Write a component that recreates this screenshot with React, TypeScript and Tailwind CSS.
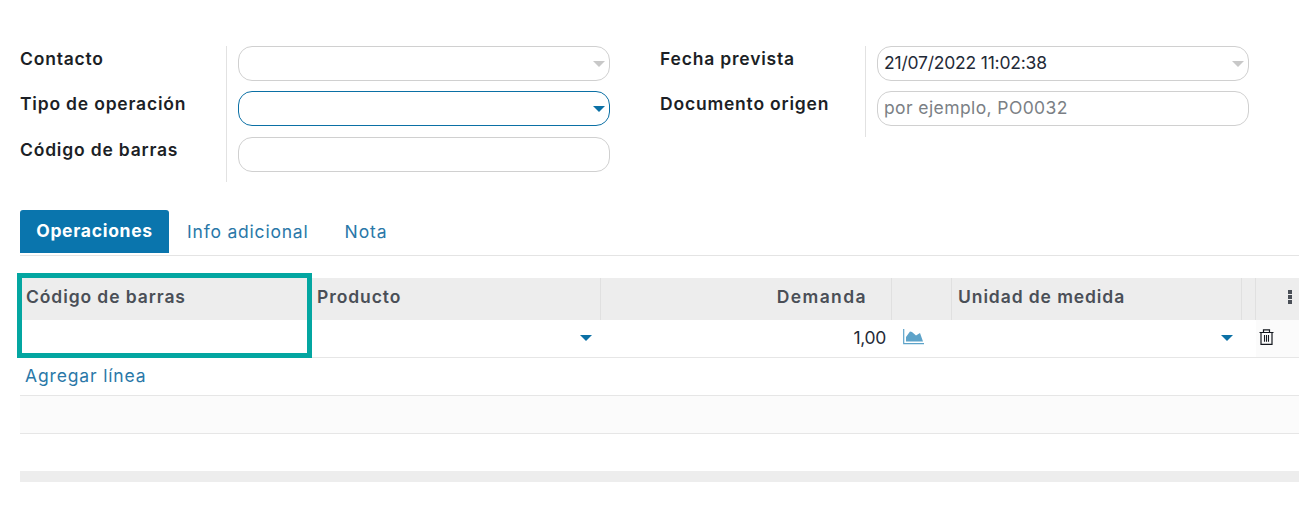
const font = "font-['Inter','Open_Sans',sans-serif]";

function Caret({ color }: { color: string }) {
  return (
    <svg width="12" height="6" viewBox="0 0 12 6" className="shrink-0">
      <path d="M0 0H12L6 6Z" fill={color} />
    </svg>
  );
}

function Field({ children, caret, focus, className = "" }: { children?: React.ReactNode; caret?: string; focus?: boolean; className?: string }) {
  return (
    <div className={`flex h-[35px] w-[372px] items-center justify-between rounded-[14px] border bg-white pl-[6px] pr-[4px] text-[17.5px] tracking-[-0.2px] text-[#1f2a37] ${focus ? "border-[#0b70a5]" : "border-[#d0d0d0]"} ${className}`}>
      <span>{children}</span>
      {caret && <Caret color={caret} />}
    </div>
  );
}

function Label({ children, className = "" }: { children: React.ReactNode; className?: string }) {
  return <div className={`flex h-[35px] items-start text-[17.5px] font-semibold leading-[26px] tracking-[0.8px] text-[#1c1f26] ${className}`}>{children}</div>;
}

function Head({ children, right, line = true }: { children?: React.ReactNode; right?: boolean; line?: boolean }) {
  return (
    <div className={`flex h-full items-center px-[6px] pb-[4px] text-[17.5px] font-semibold tracking-[0.9px] text-[#4a4f57] ${right ? "justify-end pr-[24px] tracking-[1.4px]" : ""} ${line ? "border-r border-[#e0e0e0]" : ""}`}>
      {children}
    </div>
  );
}

const cols = "grid-cols-[291px_290px_291px_60px_290px_14px_43px]";

export default function App() {
  return (
    <div className={`${font} h-[510px] w-[1313px] overflow-hidden bg-white pl-[20px] pr-[14px] pt-[46px]`}>
      <div className="flex">
        <div className="grid w-[590px] grid-cols-[207px_1fr]">
          <div className="flex flex-col gap-[10px] border-r border-[#e2e2e2] pb-[10px]">
            <Label>Contacto</Label>
            <Label>Tipo de operación</Label>
            <Label className="mt-[1px]">Código de barras</Label>
          </div>
          <div className="flex flex-col gap-[10px] pl-[11px]">
            <Field caret="#c8c8c8" />
            <Field caret="#0b70a5" focus />
            <Field className="mt-[1px]" />
          </div>
        </div>
        <div className="ml-[50px] grid h-[91px] grid-cols-[206px_1fr]">
          <div className="flex flex-col gap-[10px] border-r border-[#e2e2e2]">
            <Label>Fecha prevista</Label>
            <Label>Documento origen</Label>
          </div>
          <div className="flex flex-col gap-[10px] pl-[11px]">
            <Field caret="#c8c8c8">21/07/2022 11:02:38</Field>
            <Field><span className="tracking-[0.4px] text-[#7b7f85]">por ejemplo, PO0032</span></Field>
          </div>
        </div>
      </div>

      <div className="mt-[28px] flex h-[46px] items-start border-b border-[#e4e4e4]">
        <div className="flex h-[43px] w-[149px] items-center justify-center rounded-t-[3px] bg-[#0a75ad] text-[17.5px] font-bold tracking-[0.7px] text-white">Operaciones</div>
        <div className="ml-[18px] flex h-[44px] items-center text-[17.5px] tracking-[0.8px] text-[#2a78a8]">Info adicional</div>
        <div className="ml-[36px] flex h-[44px] items-center text-[17.5px] tracking-[0.9px] text-[#2a78a8]">Nota</div>
      </div>

      <div className="relative mt-[22px]">
        <div className={`grid h-[42px] ${cols} items-center bg-[#ededed]`}>
          <Head line={false}>Código de barras</Head>
          <Head>Producto</Head>
          <Head right>Demanda</Head>
          <Head />
          <Head>Unidad de medida</Head>
          <Head />
          <div className="flex justify-end pr-[7px] pb-[4px]">
            <svg width="4" height="14" viewBox="0 0 4 14"><path d="M0 0h4v4H0zM0 5h4v4H0zM0 10h4v4H0z" fill="#4a4f57" /></svg>
          </div>
        </div>
        <div className={`grid h-[38px] ${cols} items-center border-b border-[#e6e6e6]`}>
          <div />
          <div className="flex justify-end pr-[9px] pb-[2px]"><Caret color="#0b70a5" /></div>
          <div className="pr-[6px] text-right text-[17.5px] tracking-[-0.3px] text-[#1f2a37]">1,00</div>
          <div className="pl-[11px] pb-[3px]">
            <svg width="21" height="16" viewBox="0 0 21 16" className="block">
              <path d="M0.7 0V14.6H21" fill="none" stroke="#5da3c9" strokeWidth="1.2" />
              <path d="M3 12.5V8L7 2.5 9 3 13 6.5 17 4 20 12.5Z" fill="#5da3c9" />
            </svg>
          </div>
          <div className="flex justify-end pr-[9px] pb-[2px]"><Caret color="#0b70a5" /></div>
          <div />
          <div className="flex h-full items-center bg-[#fbfbfb] pl-[3px] pb-[3px]">
            <svg width="15" height="16" viewBox="0 0 15 16" className="block">
              <path d="M0.5 3.5H14.5M4.5 3.5V0.8H10.5V3.5M2 3.5V15.3H13V3.5" fill="none" stroke="#14181f" strokeWidth="1.2" />
              <path d="M5.5 6V12.8M7.5 6V12.8M9.5 6V12.8" fill="none" stroke="#14181f" strokeWidth="1.1" />
            </svg>
          </div>
        </div>
        <div className="flex h-[38px] items-center border-b border-[#e6e6e6] pl-[5px] text-[17.5px] tracking-[0.85px] text-[#2a78a8]">Agregar línea</div>
        <div className="h-[38px] border-b border-[#e6e6e6] bg-[#fbfbfb]" />
        <div className="h-[37px]" />
        <div className="h-[11px] bg-[#ededed]" />
        <div className="absolute -left-[3px] -top-[5px] h-[85px] w-[295px] border-[5px] border-[#03a6a1]" />
      </div>
    </div>
  );
}
